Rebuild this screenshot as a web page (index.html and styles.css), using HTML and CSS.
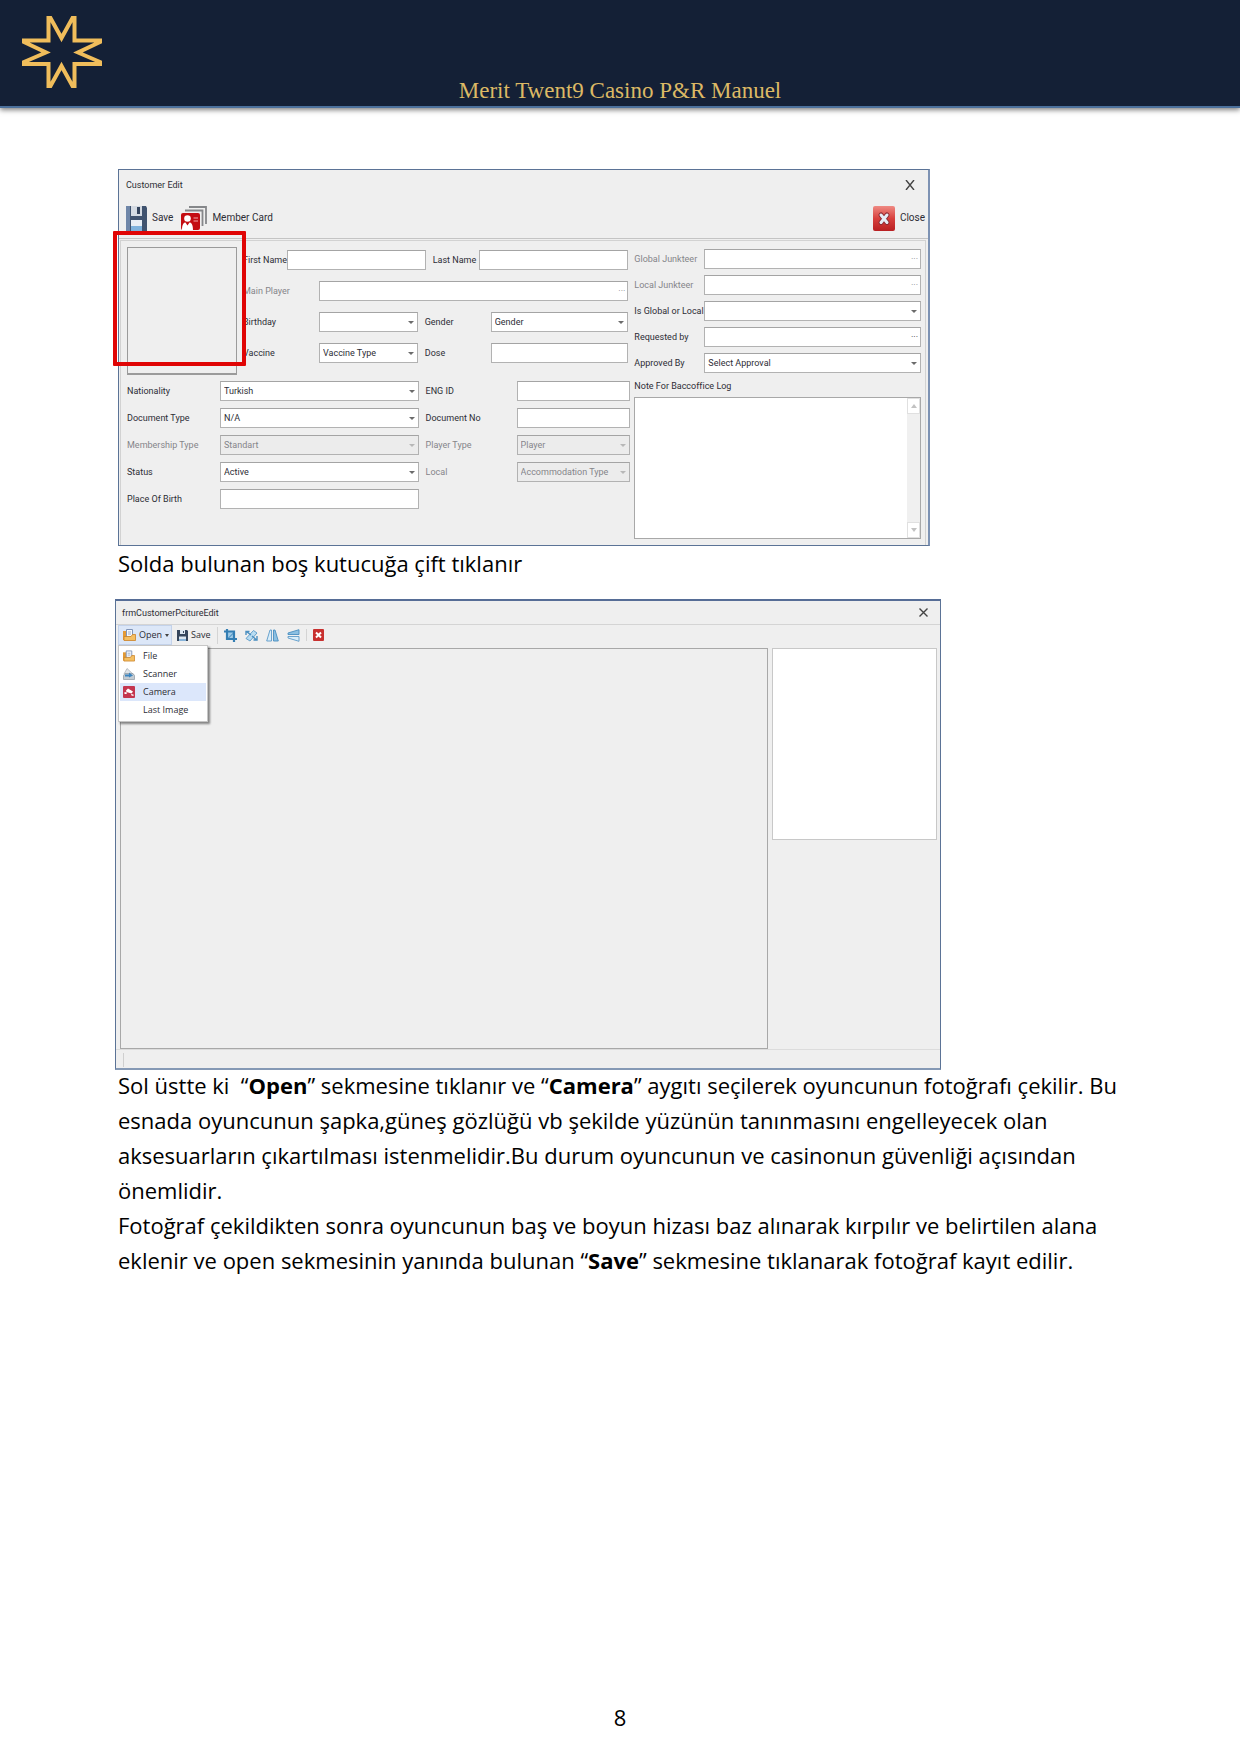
FILE: index.html
```html
<!DOCTYPE html>
<html lang="tr">
<head>
<meta charset="utf-8">
<title>Merit Twent9 Casino P&amp;R Manuel</title>
<link rel="stylesheet" href="styles.css">
</head>
<body>
<header class="banner">
  <svg class="logo" width="80" height="72" viewBox="0 0 80 72" fill="none" stroke="#f0bd5b" stroke-width="4" aria-label="Merit">
    <path d="M26.500 2 28.500 2 39.500 22 50.500 2 52.500 2V24.500H78V26L56 36.500 78 46V48H52.500V70H50.500L39.500 50 28.500 70H26.500V48H2V46L24 36.500 2 26V24.500H26.500Z"/>
  </svg>
  <h1 class="banner-title">Merit Twent9 Casino P&amp;R Manuel</h1>
</header>

<main class="content">
  <section class="window customer">
    <div class="titlebar">
      <span>Customer Edit</span>
      <button class="x-btn" aria-label="Kapat"><svg width="10" height="10" viewBox="0 0 10 10" stroke="#444" stroke-width="1.400"><path d="M1 0 9 10M9 0 1 10"/></svg></button>
    </div>
    <div class="toolbar">
      <button class="tool">
        <svg width="21" height="25" viewBox="0 0 21 25"><path fill="#40536f" d="M0 0H20L21 2V25H0Z"/><path fill="#6f86a8" d="M0 0H4V25H0Z"/><path fill="#d4dae2" d="M5 0H16V10H5Z"/><path fill="#33435c" d="M11 1H14V8H11Z"/><path fill="#e8eef5" d="M5 14H16V25H5Z"/><path fill="#7fb2dd" d="M5 20H16V25H5Z"/></svg>
        <span>Save</span>
      </button>
      <button class="tool">
        <svg width="26" height="24" viewBox="0 0 26 24"><path fill="none" stroke="#85878a" stroke-width="1.800" d="M8 1H25V18M4 4.500H21.500V20"/><rect x="0" y="7" width="19" height="17" rx="2" fill="#c40d12"/><circle cx="6.500" cy="12.500" r="3.300" fill="#fff"/><path fill="#fff" d="M1 24C1 18 3 16.500 4.500 16.500L6.500 19.500 8.500 16.500C10 16.500 12 18 12 24Z"/><path stroke="#f2a7a9" stroke-width="1.200" d="M12.500 12H17M12.500 15H17"/></svg>
        <span>Member Card</span>
      </button>
      <button class="tool tool-close">
        <svg width="22" height="25" viewBox="0 0 22 25"><defs><linearGradient id="red" x1="0" y1="0" x2="0" y2="1"><stop offset="0" stop-color="#ef8a83"/><stop offset=".5" stop-color="#d8403d"/><stop offset="1" stop-color="#b81f22"/></linearGradient></defs><rect width="22" height="25" rx="2" fill="url(#red)"/><path stroke="#8d2b33" stroke-width="5" stroke-linecap="round" d="M8 9 14 16.500M14 9 8 16.500"/><path stroke="#e6ecf5" stroke-width="3" stroke-linecap="round" d="M8 9 14 16.500M14 9 8 16.500"/></svg>
        <span>Close</span>
      </button>
    </div>
    <form class="panel">
      <div class="left">
        <div class="person">
          <div class="photo"><div class="highlight"></div></div>
          <div class="rows">
            <div class="row row-name">
              <label for="first">First Name</label><input id="first" type="text">
              <label class="pad" for="last">Last Name</label><input id="last" type="text">
            </div>
            <div class="row row-player">
              <label class="dim" for="main">Main Player</label>
              <span class="lookup"><input id="main" type="text"><button type="button" class="dim">···</button></span>
            </div>
            <div class="row row-pair">
              <label for="birth">Birthday</label><span class="drop"><select id="birth"><option></option></select></span>
              <label class="pad" for="gender">Gender</label><span class="drop"><select id="gender"><option>Gender</option></select></span>
            </div>
            <div class="row row-pair">
              <label for="vaccine">Vaccine</label><span class="drop"><select id="vaccine"><option>Vaccine Type</option></select></span>
              <label class="pad" for="dose">Dose</label><input id="dose" type="text">
            </div>
          </div>
        </div>
        <div class="details">
          <label for="nat">Nationality</label><span class="drop"><select id="nat"><option>Turkish</option></select></span>
          <label class="pad" for="eng">ENG ID</label><input id="eng" type="text">
          <label for="doct">Document Type</label><span class="drop"><select id="doct"><option>N/A</option></select></span>
          <label class="pad" for="docn">Document No</label><input id="docn" type="text">
          <label class="dim" for="mem">Membership Type</label><span class="drop"><select id="mem" disabled><option>Standart</option></select></span>
          <label class="pad dim" for="ptype">Player Type</label><span class="drop"><select id="ptype" disabled><option>Player</option></select></span>
          <label for="status">Status</label><span class="drop"><select id="status"><option>Active</option></select></span>
          <label class="pad dim" for="local">Local</label><span class="drop"><select id="local" disabled><option>Accommodation Type</option></select></span>
          <label for="place">Place Of Birth</label><input id="place" type="text">
        </div>
      </div>
      <div class="right">
        <div class="approvals">
          <label class="dim" for="gj">Global Junkteer</label><span class="lookup"><input id="gj" type="text"><button type="button" class="dim">···</button></span>
          <label class="dim" for="lj">Local Junkteer</label><span class="lookup"><input id="lj" type="text"><button type="button" class="dim">···</button></span>
          <label for="gl">Is Global or Local</label><span class="drop"><select id="gl"><option></option></select></span>
          <label for="req">Requested by</label><span class="lookup"><input id="req" type="text"><button type="button">···</button></span>
          <label for="app">Approved By</label><span class="drop"><select id="app"><option>Select Approval</option></select></span>
        </div>
        <label class="note-label" for="note">Note For Baccoffice Log</label>
        <div class="note">
          <textarea id="note"></textarea>
          <div class="scroll">
            <button type="button" class="up" aria-label="Yukarı"></button>
            <button type="button" class="down" aria-label="Aşağı"></button>
          </div>
        </div>
      </div>
    </form>
  </section>

  <p class="text caption">Solda bulunan boş kutucuğa çift tıklanır</p>

  <section class="window picture">
    <div class="titlebar">
      <span>frmCustomerPcitureEdit</span>
      <button class="x-btn" aria-label="Kapat"><svg width="9" height="9" viewBox="0 0 9 9" stroke="#444" stroke-width="1.400"><path d="M.5 .5 8.500 8.500M8.500 .5 .5 8.500"/></svg></button>
    </div>
    <div class="toolbar">
      <div class="menu-anchor">
        <button class="tool open">
          <svg width="13" height="12" viewBox="0 0 13 12"><path fill="#e39a35" d="M0 2H4V11H0Z"/><path fill="#f5f8fc" stroke="#8095b8" d="M3.500 .5H9.500V8H3.500Z"/><path stroke="#9db0cc" d="M5 3H8M5 5H8"/><path fill="#f4bf62" stroke="#cc8125" stroke-width=".8" d="M1 7.500H8L9.500 5.500H12.500V11.500H1Z"/></svg>
          <span>Open</span><i class="caret"></i>
        </button>
        <ul class="menu">
          <li><button><svg width="12" height="12" viewBox="0 0 13 12"><path fill="#e39a35" d="M0 2H4V11H0Z"/><path fill="#f5f8fc" stroke="#8095b8" d="M3.500 .5H9.500V8H3.500Z"/><path stroke="#9db0cc" d="M5 3H8M5 5H8"/><path fill="#f4bf62" stroke="#cc8125" stroke-width=".8" d="M1 7.500H8L9.500 5.500H12.500V11.500H1Z"/></svg>File</button></li>
          <li><button><svg width="12" height="12" viewBox="0 0 12 12"><path fill="#dfe4e8" stroke="#a0a8af" stroke-width=".7" d="M1 6 4 .5 11 7"/><path fill="#c3cbd2" stroke="#8d979f" stroke-width=".7" d="M.5 7.500 2 5.500H10L11.500 7.500V11.500H.5Z"/><path fill="#3b84bf" d="M2 6.500H6V4.500L10 7.500 6 9.500V8.500H2Z"/></svg>Scanner</button></li>
          <li><button class="active"><svg width="12" height="12" viewBox="0 0 12 12"><rect width="12" height="12" rx="1" fill="#c4364f"/><path fill="#fff" d="M3 4.500 5 2.500 10 5.500 8.500 7.500 3.500 6ZM1.500 6 4 6.500 3.500 8H1.500ZM8 8 10.500 8.500V10L8.500 9.500Z"/></svg>Camera</button></li>
          <li><button><svg width="12" height="12"></svg>Last Image</button></li>
        </ul>
      </div>
      <button class="tool save">
        <svg width="11" height="11" viewBox="0 0 11 11"><path fill="#36465c" d="M0 0H10L11 1V11H0Z"/><path fill="#dce6f0" d="M3 0H8V4H3ZM2 6.500H9V11H2Z"/><path fill="#36465c" d="M6 1H7V3H6Z"/><path fill="#88b4da" d="M2 9H9V11H2Z"/></svg>
        <span>Save</span>
      </button>
      <div class="icons">
        <button aria-label="Kırp"><svg width="13" height="13" viewBox="0 0 13 13" fill="none"><path fill="#9fcbe8" d="M3 3H10V10H3Z"/><path stroke="#347eb3" stroke-width="2.200" d="M0 2.500H10V13M3 0V10H13"/><path stroke="#347eb3" d="M4 9.500 9.500 4"/></svg></button>
        <button aria-label="Döndür"><svg width="13" height="13" viewBox="0 0 13 13" fill="none"><path fill="#b8dcf2" stroke="#4a8fc1" stroke-width=".8" d="M1 9.500 8.500 1.500 12 4 5 12Z"/><path stroke="#4a8fc1" stroke-width="1.400" d="M1 6V2.500H4.500M2 3 6 6M12 7V11H8.500M7 7 11 10.500"/></svg></button>
        <button aria-label="Yatay çevir"><svg width="13" height="13" viewBox="0 0 13 13"><path fill="#d9edf9" stroke="#5b9ac8" stroke-width=".9" d="M5.500 1V12H.7L4 1Z"/><path fill="#8cc0e2" stroke="#4a8fc1" stroke-width=".9" d="M7.500 1V12H12.300L9 1Z"/></svg></button>
        <button aria-label="Dikey çevir"><svg width="13" height="13" viewBox="0 0 13 13"><path fill="#8cc0e2" stroke="#4a8fc1" stroke-width=".9" d="M12 .7V5.500H1V4Z"/><path fill="#d9edf9" stroke="#5b9ac8" stroke-width=".9" d="M12 12.300V7.500H1V9Z"/></svg></button>
      </div>
      <button class="icon-close" aria-label="Sil"><svg width="11" height="12" viewBox="0 0 11 12"><rect width="11" height="12" rx="1" fill="#c8302f"/><path stroke="#fff" stroke-width="2" d="M3 3.500 8 8.500M8 3.500 3 8.500"/></svg></button>
    </div>
    <div class="workspace">
      <div class="canvas"></div>
      <div class="preview"></div>
    </div>
    <div class="statusbar"></div>
  </section>

  <p class="text">Sol üstte ki&nbsp; “<b>Open</b>” sekmesine tıklanır ve “<b>Camera</b>” aygıtı seçilerek oyuncunun fotoğrafı çekilir. Bu<br>
  esnada oyuncunun şapka,güneş gözlüğü vb şekilde yüzünün tanınmasını engelleyecek olan<br>
  aksesuarların çıkartılması istenmelidir.Bu durum oyuncunun ve casinonun güvenliği açısından<br>
  önemlidir.</p>
  <p class="text">Fotoğraf çekildikten sonra oyuncunun baş ve boyun hizası baz alınarak kırpılır ve belirtilen alana<br>
  eklenir ve open sekmesinin yanında bulunan “<b>Save</b>” sekmesine tıklanarak fotoğraf kayıt edilir.</p>
</main>

<footer class="page-number">8</footer>
</body>
</html>
```

FILE: styles.css
```css
* {
  box-sizing: border-box;
}

body {
  margin: 0;
  min-height: 100vh;
  display: flex;
  flex-direction: column;
  background: #fff;
  color: #000;
  font-family: "Open Sans", "Noto Sans", sans-serif;
}

button,
input,
select,
textarea {
  font: inherit;
  color: inherit;
  margin: 0;
  padding: 0;
  border: 0;
  border-radius: 0;
  background: none;
  min-width: 0;
}

svg {
  display: block;
  flex: none;
}

/* Page banner */
.banner {
  display: grid;
  grid-template-columns: 1fr auto 1fr;
  align-items: end;
  height: 108px;
  padding: 0 20px 3px;
  background: #142036;
  border-bottom: 2px solid #4b709c;
  box-shadow: 0 2px 5px rgba(0, 0, 0, 0.5);
}

.logo {
  align-self: start;
  margin: 16px 0 0 2px;
}

.banner-title {
  margin: 0;
  font: 23px/24px "Liberation Serif", serif;
  color: #dcb965;
}

.content {
  padding: 61px 60px 0 118px;
}

.text {
  margin: 0;
  font-size: 22px;
  line-height: 35px;
}

.caption {
  margin-bottom: 18px;
}

.page-number {
  margin-top: auto;
  padding-bottom: 20px;
  text-align: center;
  font-size: 22px;
  line-height: 35px;
}

/* Application windows */
.window {
  display: flex;
  flex-direction: column;
  width: 100%;
  background: #efefef;
  border: 1px solid #5b7396;
  color: #2d2d35;
  font-family: Roboto, "Liberation Sans", sans-serif;
  font-size: 9px;
  line-height: 14px;
}

.titlebar {
  display: flex;
  align-items: center;
  justify-content: space-between;
}

.toolbar,
.tool {
  display: flex;
  align-items: center;
}

.x-btn {
  display: flex;
}

/* Customer form */
.customer {
  max-width: 812px;
  min-height: 377px;
  border-right: 2px solid #7d92b3;
}

.customer .titlebar {
  height: 30px;
  padding: 0 13px 0 7px;
}

.customer .toolbar {
  height: 39px;
  padding: 0 3px 2px 7px;
  gap: 8px;
  font-size: 10px;
  border-bottom: 1px solid #c4c4c4;
}

.customer .tool {
  gap: 5px;
}

.customer .tool-close {
  margin-left: auto;
}

.panel {
  flex: 1;
  display: flex;
  gap: 4px;
  margin: 1px 2px 0 1px;
  padding: 6px 4px 6px 6px;
  border: 1px solid #d2d2d2;
  border-bottom: 0;
}

.left {
  flex: 504;
  min-width: 0;
}

.right {
  flex: 287;
  min-width: 0;
  display: flex;
  flex-direction: column;
}

.person {
  display: flex;
  gap: 6px;
}

.photo {
  position: relative;
  flex: none;
  width: 110px;
  height: 128px;
  border: 1px solid #9b9b9b;
  border-bottom-width: 2px;
}

/* Red marker drawn over the photo box */
.highlight {
  position: absolute;
  top: -17px;
  left: -15px;
  width: 133px;
  height: 135px;
  border: 4px solid #e00505;
  border-radius: 1px;
}

.rows {
  flex: 1;
  display: flex;
  flex-direction: column;
  gap: 11px;
  padding-top: 3px;
}

.row {
  display: grid;
  align-items: center;
  padding-right: 2px;
}

.row-name {
  grid-template-columns: 44px 139fr 53px 150fr;
}

.row-player {
  grid-template-columns: 76px 1fr;
}

.row-pair {
  grid-template-columns: 76px 99fr 73px 138fr;
}

.details {
  display: grid;
  grid-template-columns: 93px 199fr 98px 114fr;
  gap: 7px 0;
  align-items: center;
  margin-top: 6px;
}

.approvals {
  display: grid;
  grid-template-columns: 70px 1fr;
  gap: 6px 0;
  align-items: center;
  padding-top: 2px;
}

label {
  white-space: nowrap;
}

.pad {
  padding-left: 7px;
}

.dim {
  color: #85858a;
}

.panel input,
.panel select {
  width: 100%;
  height: 20px;
  padding: 0 3px;
  background: #fff;
  border: 1px solid #b2b2b2;
  border-top-color: #a4a4a4;
}

.panel select {
  appearance: none;
  padding-right: 14px;
}

.panel select:disabled {
  background: #ececec;
  color: #85858a;
  opacity: 1;
}

.drop,
.lookup {
  position: relative;
  display: flex;
  min-width: 0;
}

.drop::after {
  content: "";
  position: absolute;
  right: 4px;
  top: 9px;
  border: 3px solid transparent;
  border-top-color: #6b6b6b;
  border-bottom: 0;
  pointer-events: none;
}

.drop:has(:disabled)::after {
  border-top-color: #b8b8b8;
}

.lookup button {
  position: absolute;
  right: 3px;
  top: 3px;
}

.note-label {
  margin-top: 6px;
}

.note {
  flex: 1;
  display: flex;
  margin-top: 4px;
  background: #fff;
  border: 1px solid #a8a8a8;
}

.note textarea {
  flex: 1;
  resize: none;
}

.scroll {
  width: 13px;
  display: flex;
  flex-direction: column;
  justify-content: space-between;
  background: #f0f0f0;
}

.scroll button {
  height: 16px;
  display: grid;
  place-items: center;
  background: #fff;
  border: 1px solid #e0e0e0;
}

.scroll button::after {
  content: "";
  border: 3px solid transparent;
}

.scroll .up::after {
  border-top: 0;
  border-bottom: 4px solid #c2c2c2;
}

.scroll .down::after {
  border-bottom: 0;
  border-top: 4px solid #c2c2c2;
}

/* Picture editor */
.picture {
  max-width: 826px;
  margin: 0 0 -2px -3px;
  border-top: 2px solid #566d96;
  border-bottom: 2px solid #8599b5;
}

.picture .titlebar {
  height: 24px;
  padding: 0 12px 0 6px;
  border-bottom: 1px solid #d4d4d4;
}

.picture .toolbar {
  height: 23px;
  padding: 0 2px 3px;
  font-family: "Open Sans", "Noto Sans", sans-serif;
}

.menu-anchor {
  position: relative;
}

.open {
  gap: 3px;
  height: 20px;
  padding: 0 2px 0 4px;
  background: #dce7f8;
  border: 1px solid #c3d2ea;
}

.caret {
  border: 2px solid transparent;
  border-top: 3px solid #444;
  border-bottom: 0;
}

.save {
  gap: 3px;
  height: 17px;
  padding: 0 6px 0 5px;
  border-right: 1px solid #d4d4d4;
}

.icons {
  display: flex;
  gap: 8px;
  padding: 0 6px;
}

.icon-close {
  padding: 0 6px;
  border-left: 1px solid #d4d4d4;
}

.menu {
  position: absolute;
  top: 20px;
  left: 0;
  width: 90px;
  margin: 0;
  padding: 1px 1px 2px;
  list-style: none;
  background: #fff;
  border: 1px solid #c6c6c6;
  box-shadow: 2px 2px 2px rgba(0, 0, 0, 0.45);
}

.menu button {
  display: flex;
  align-items: center;
  gap: 8px;
  width: 100%;
  height: 18px;
  padding: 0 3px;
  text-align: left;
}

.menu .active {
  background: #dce7fb;
}

.workspace {
  display: flex;
  align-items: flex-start;
  gap: 4px;
  padding: 0 3px 0 4px;
}

.canvas {
  flex: 650;
  height: 401px;
  border: 1px solid #a8a8a8;
}

.preview {
  flex: 164;
  height: 192px;
  background: #fff;
  border: 1px solid #c8c8c8;
}

.statusbar {
  height: 19px;
  padding: 3px 7px;
  border-top: 1px solid #dcdcdc;
}

.statusbar::before {
  content: "";
  display: block;
  height: 14px;
  border-left: 1px solid #cfcfcf;
}
```
